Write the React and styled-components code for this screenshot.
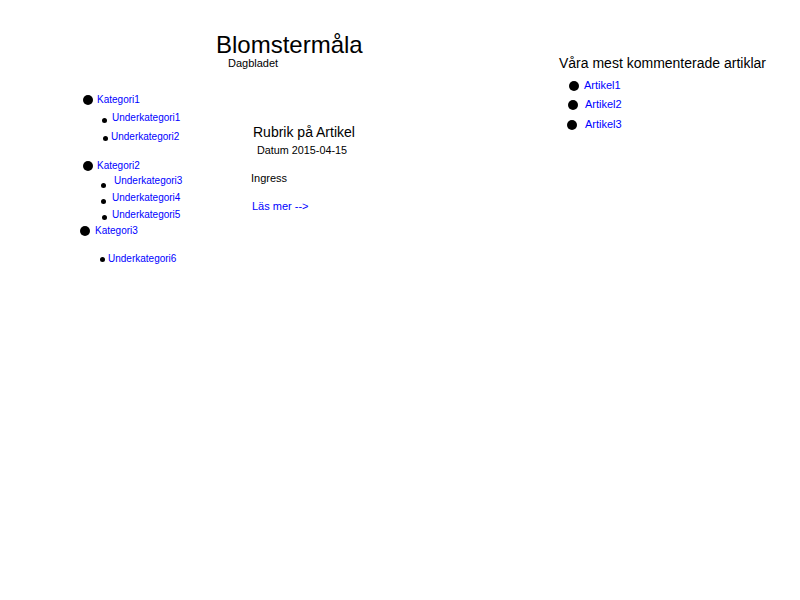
import React from 'react';
import styled, {createGlobalStyle} from 'styled-components';

const navItems = [
	{label: 'Kategori1', big: true, x: 3, gap: 4, top: 0},
	{label: 'Underkategori1', x: 22, gap: 5, top: 4, drop: 2},
	{label: 'Underkategori2', x: 23, gap: 3, top: 5, drop: 1},
	{label: 'Kategori2', big: true, x: 3, gap: 4, top: 15},
	{label: 'Underkategori3', x: 21, gap: 8, top: 1, drop: 4},
	{label: 'Underkategori4', x: 21, gap: 6, top: 3, drop: 3},
	{label: 'Underkategori5', x: 22, gap: 5, top: 3, drop: 2},
	{label: 'Kategori3', big: true, x: 0, gap: 5, top: 2},
	{label: 'Underkategori6', x: 20, gap: 3, top: 14}
];

const topArticles = [
	{label: 'Artikel1', x: 10, gap: 5, top: 8},
	{label: 'Artikel2', x: 9, gap: 7, top: 6},
	{label: 'Artikel3', x: 8, gap: 8, top: 7}
];

export default function App(){
	return(
		<>
			<GlobalStyle/>
			<Page>
				<Nav>
					{navItems.map((item, index) =>
						<NavRow key={index} x={item.x} top={item.top}>
							<Bullet big={item.big} drop={item.drop || 0}/>
							<NavLink href="#" gap={item.gap}>{item.label}</NavLink>
						</NavRow>
					)}
				</Nav>
				<Main>
					<Masthead>
						<Title>Blomstermåla</Title>
						<Subtitle>Dagbladet</Subtitle>
					</Masthead>
					<Article>
						<Headline>Rubrik på Artikel</Headline>
						<Dateline>Datum 2015-04-15</Dateline>
						<Ingress>Ingress</Ingress>
						<ReadMore href="#">Läs mer --&gt;</ReadMore>
					</Article>
				</Main>
				<Aside>
					<AsideTitle>Våra mest kommenterade artiklar</AsideTitle>
					{topArticles.map((item, index) =>
						<AsideRow key={index} x={item.x} top={item.top}>
							<Bullet big/>
							<AsideLink href="#" gap={item.gap}>{item.label}</AsideLink>
						</AsideRow>
					)}
				</Aside>
			</Page>
		</>
	)
}

const GlobalStyle = createGlobalStyle`
	html, body{
		margin: 0;
		background: #fff;
		font-family: "Liberation Sans", Arial, sans-serif;
		color: #000;
	}
	a{
		color: #0000ff;
		text-decoration: none;
	}
`

const Page = styled.div`
	width: 800px;
	height: 600px;
	display: grid;
	grid-template-columns: 80px 136px 343px 1fr;
	align-items: start;
	&::before{
		content: '';
	}
`

const Nav = styled.ul`
	list-style: none;
	margin: 0;
	padding: 93px 0 0 0;
	display: flex;
	flex-direction: column;
`

const NavRow = styled.li`
	display: flex;
	align-items: center;
	height: 14px;
	margin-top: ${({top}) => top}px;
	padding-left: ${({x}) => x}px;
	white-space: nowrap;
`

const Bullet = styled.span`
	flex: none;
	width: ${({big}) => big ? 10 : 5}px;
	height: ${({big}) => big ? 10 : 5}px;
	border-radius: 50%;
	background: #000;
	margin-top: ${({drop}) => (drop || 0) * 2}px;
`

const NavLink = styled.a`
	font-size: 10px;
	line-height: 14px;
	margin-left: ${({gap}) => gap}px;
`

const Main = styled.div`
	display: flex;
	flex-direction: column;
`

const Masthead = styled.header`
	padding-top: 33px;
	display: flex;
	flex-direction: column;
`

const Title = styled.h1`
	margin: 0;
	font-size: 24px;
	font-weight: normal;
	line-height: 24px;
`

const Subtitle = styled.div`
	margin: 1px 0 0 12px;
	font-size: 11px;
	line-height: 10px;
`

const Article = styled.article`
	margin: 56px 0 0 35px;
	display: flex;
	flex-direction: column;
	align-items: flex-start;
`

const Headline = styled.h2`
	margin: 0 0 0 2px;
	font-size: 14px;
	font-weight: normal;
	line-height: 16px;
`

const Dateline = styled.div`
	margin: 3.5px 0 0 6px;
	font-size: 10.8px;
	line-height: 13px;
`

const Ingress = styled.p`
	margin: 15px 0 0 0;
	font-size: 11px;
	line-height: 13px;
`

const ReadMore = styled.a`
	margin: 15px 0 0 1px;
	font-size: 11px;
	line-height: 13px;
`

const Aside = styled.aside`
	padding-top: 55px;
	display: flex;
	flex-direction: column;
`

const AsideTitle = styled.h3`
	margin: 0;
	font-size: 14px;
	font-weight: normal;
	line-height: 16px;
	white-space: nowrap;
`

const AsideRow = styled.div`
	display: flex;
	align-items: center;
	height: 13px;
	margin-top: ${({top}) => top}px;
	padding-left: ${({x}) => x}px;
`

const AsideLink = styled.a`
	font-size: 11px;
	line-height: 13px;
	margin-left: ${({gap}) => gap}px;
`
